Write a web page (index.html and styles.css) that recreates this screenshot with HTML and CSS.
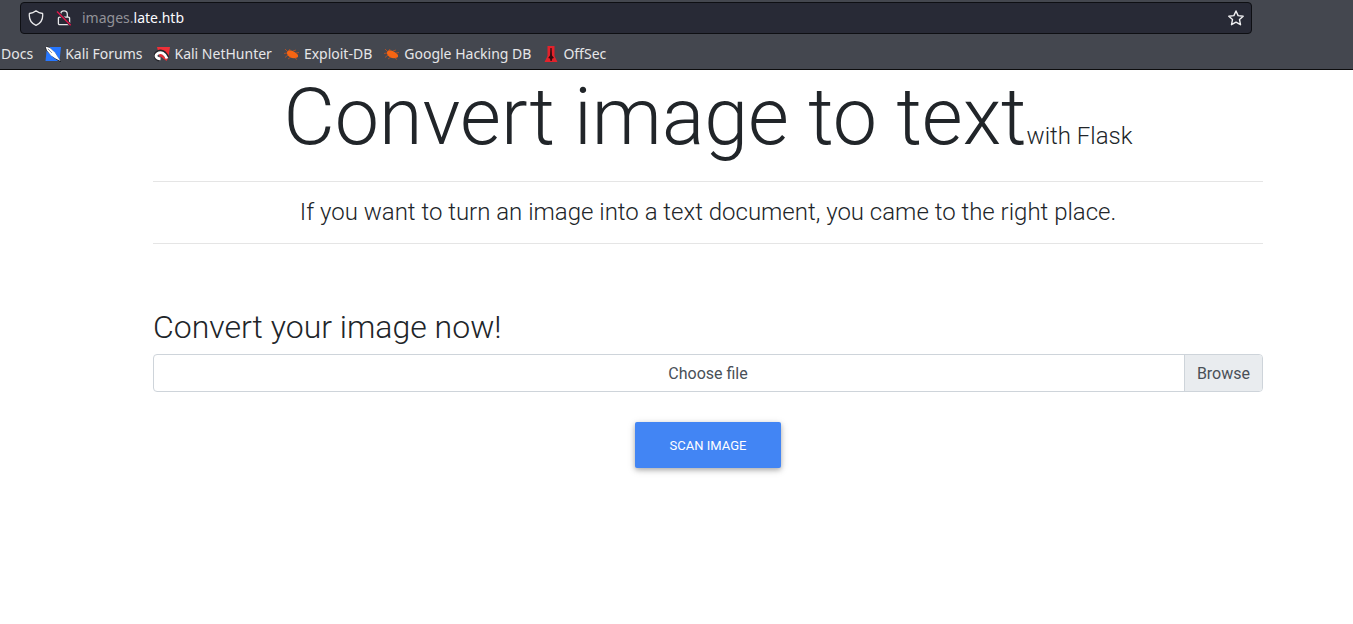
FILE: index.html
```html
<!DOCTYPE html>
<html lang="en">
<head>
<meta charset="utf-8">
<meta name="viewport" content="width=device-width, initial-scale=1">
<title>Convert image to text</title>
<link rel="stylesheet" href="styles.css">
</head>
<body>
<header class="browser">
  <div class="address-bar">
    <div class="site-status">
      <svg class="icon" viewBox="0 0 16 16" aria-hidden="true"><path d="M8 .8C10 2.4 12.200 3.200 14.600 3.500C15.200 9 12.800 13.300 8 15.300C3.200 13.300.8 9 1.400 3.500C3.800 3.200 6 2.400 8 .8Z" fill="none" stroke="#e8e8ea" stroke-width="1.300" stroke-linejoin="round"/></svg>
      <svg class="icon" viewBox="0 0 16 16" aria-hidden="true"><path d="M4.700 7V4.200a3.300 3.300 0 0 1 6.600 0V7M3.600 7.200h8.800a1.200 1.200 0 0 1 1.200 1.200v5a1.200 1.200 0 0 1-1.200 1.200H3.600a1.200 1.200 0 0 1-1.200-1.200v-5a1.200 1.200 0 0 1 1.200-1.200Z" fill="none" stroke="#e8e8ea" stroke-width="1.300"/><path d="M1 1.500 14.700 15.200" stroke="#282a36" stroke-width="3"/><path d="M1 1.500 14.700 15.200" stroke="#e2164a" stroke-width="1.400"/></svg>
    </div>
    <span class="url"><span class="url-sub">images.</span>late.htb</span>
    <button class="star" type="button" aria-label="Bookmark this page"><svg class="icon" viewBox="0 0 16 16" aria-hidden="true"><path d="m8 1 2.100 4.600 5.100.6-3.700 3.400 1 5.100L8 12.200l-4.500 2.500 1-5.100L.8 6.200l5.100-.6Z" fill="none" stroke="#f0f0f2" stroke-width="1.400" stroke-linejoin="round"/></svg></button>
  </div>
  <nav class="bookmarks" aria-label="Bookmarks">
    <a href="#docs">Docs</a>
    <a href="#forums"><svg class="icon" viewBox="0 0 16 16" aria-hidden="true"><path d="M2 1h14l-1.500 14H.5Z" fill="#2777ff"/><path d="M0 0 4 1.500 10 7l2.500 5 3.500 4-5-3-4.500-3.500L1.500 4Z" fill="#25272d" stroke="#25272d" stroke-width="1"/><path d="M.5.500 5 2l5 4.500 3 5 2.500 3.500-5-2.500L6 9.500 2 4.500Z" fill="#fff"/><path d="m3 3 4 4" stroke="#777c87" stroke-width=".8"/></svg>Kali Forums</a>
    <a href="#nethunter"><svg class="icon" viewBox="0 0 16 16" aria-hidden="true"><path d="M3 1h13l-1.500 10-2 4L5 9Z" fill="#ef3038"/><path d="M5.500 13.500C1.500 12.500.5 9 3.200 6.800C6.500 4 11 6 13.500 12" fill="none" stroke="#25262b" stroke-width="4"/><path d="M6.500 12.800C2 12.500.8 9.500 3.500 7.700C7 5.300 11 7.500 13 12.500" fill="none" stroke="#fff" stroke-width="2.800"/><path d="M5.500 10.500C7 8.500 9 9.500 10 12.500" fill="none" stroke="#df303a" stroke-width="1.600"/></svg>Kali NetHunter</a>
    <a href="#exploit-db"><svg class="icon" viewBox="0 0 16 16" aria-hidden="true"><path d="M3.500 5C5 3.500 8 4 11 6.200c2.500 1.600 3.500 3 3 4.500-1.500 1.800-5.500 2-8.200.3C3.500 9.500 2.200 7 3.500 5Z" fill="#f76513"/><path d="M4 6 1 3M5 5l1-2M9 5l3-1M12 7l3-.5M3 7 0 7.500M4 9l-3 2.500M7 11l-3 2M11 12l2 1.500" stroke="#c6531d" stroke-width=".8"/></svg>Exploit-DB</a>
    <a href="#ghdb"><svg class="icon" viewBox="0 0 16 16" aria-hidden="true"><path d="M3.500 5C5 3.500 8 4 11 6.200c2.500 1.600 3.500 3 3 4.500-1.500 1.800-5.500 2-8.200.3C3.500 9.500 2.200 7 3.500 5Z" fill="#f76513"/><path d="M4 6 1 3M5 5l1-2M9 5l3-1M12 7l3-.5M3 7 0 7.500M4 9l-3 2.500M7 11l-3 2M11 12l2 1.500" stroke="#c6531d" stroke-width=".8"/></svg>Google Hacking DB</a>
    <a href="#offsec"><svg class="icon" viewBox="0 0 16 16" aria-hidden="true"><path d="M4.500 0h7v10L14.500 16H1.500l3-6Z" fill="#e3222b"/><path d="M7.400 2h1.200l.4 7.500 2 2.500-1.700.5-.6 2.500H7.500L7 12.500 5.200 12 7 9.500Z" fill="#310c10"/></svg>OffSec</a>
  </nav>
</header>
<main class="page">
  <h1 class="title">Convert image to text<small>with Flask</small></h1>
  <hr>
  <p class="lead">If you want to turn an image into a text document, you came to the right place.</p>
  <hr>
  <form class="upload">
    <h2>Convert your image now!</h2>
    <div class="file">
      <input id="image" type="file" accept="image/*">
      <label for="image"><span class="file-name">Choose file</span><span class="file-browse">Browse</span></label>
    </div>
    <button class="scan" type="submit">SCAN IMAGE</button>
  </form>
</main>
</body>
</html>
```
FILE: styles.css
```css
* { box-sizing: border-box; }

body {
  margin: 0;
  background: #fff;
  color: #212529;
  font: 300 16px/24px Roboto, sans-serif;
}

.icon { width: 16px; height: 16px; flex: none; display: block; }

.browser {
  padding-top: 2px;
  background: #44474f;
  border-bottom: 1px solid #0c0c0d;
  color: #e6e6e8;
  font: 400 14px/20px "Noto Sans", sans-serif;
}

.address-bar {
  display: flex;
  align-items: center;
  gap: 10px;
  height: 32px;
  margin: 0 101px 0 20px;
  padding: 0 7px;
  background: #282a36;
  border: 1px solid #0e0f13;
  border-radius: 4px;
}

.site-status { display: flex; gap: 12px; }

.url { flex: 1; color: #fbfbfe; }
.url-sub { color: #929298; }

.star { padding: 0; border: 0; background: none; }

.bookmarks {
  display: flex;
  align-items: center;
  gap: 12px;
  height: 35px;
  padding: 4px 1px 0;
}

.bookmarks a {
  display: flex;
  align-items: center;
  gap: 4px;
  color: inherit;
  text-decoration: none;
  white-space: nowrap;
}

.page {
  padding: 0 90px 32px 153px;
  text-align: center;
}

.title { margin: 0; font-size: 79px; font-weight: 300; line-height: 95px; }
.title small { font-size: 24px; line-height: 24px; }

hr { margin: 16px 0; border: 0; border-top: 1px solid #e5e5e5; }

.lead { margin: 0; font-size: 24px; line-height: 29px; }

.upload { padding-top: 48px; }

.upload h2 {
  margin: 0 0 8px;
  font-size: 32px;
  font-weight: 300;
  line-height: 38px;
  text-align: left;
}

.file { position: relative; font-weight: 400; color: #495057; }

.file input {
  position: absolute;
  inset: 0;
  width: 100%;
  height: 100%;
  margin: 0;
  opacity: 0;
}

.file label {
  display: grid;
  grid-template-columns: 1fr auto;
  align-items: center;
  height: 38px;
  border: 1px solid #ced4da;
  border-radius: 4px;
  overflow: hidden;
}

.file-name { grid-area: 1 / 1 / 2 / 3; padding: 7px 12px 5px; }

.file-browse {
  grid-area: 1 / 2;
  padding: 7px 12px 5px;
  background: #e9ecef;
  border-left: 1px solid #ced4da;
}

.scan {
  margin-top: 30px;
  padding: 14px 35px 12px;
  border: 0;
  border-radius: 2px;
  background: #4285f4;
  box-shadow: 0 2px 5px rgba(0, 0, 0, .26), 0 2px 10px rgba(0, 0, 0, .12);
  color: #fff;
  font: 400 13px/20px Roboto, sans-serif;
}
```
